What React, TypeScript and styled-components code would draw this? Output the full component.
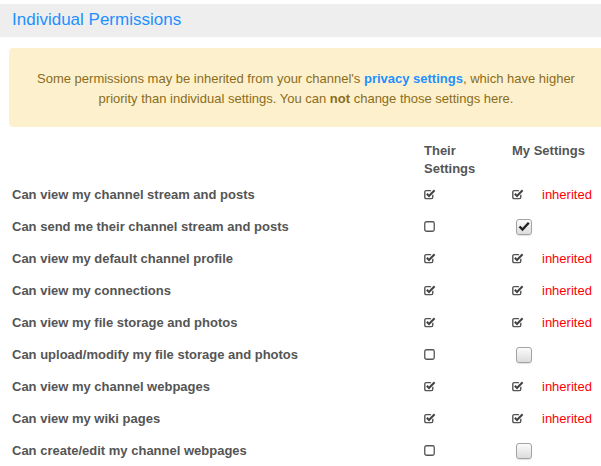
import React from "react";
import styled, { createGlobalStyle } from "styled-components";

const Global = createGlobalStyle`
  html, body { margin: 0; padding: 0; background: #fff; overflow: hidden; }
  body { font-family: "Liberation Sans", Arial, sans-serif; }
`;

const Page = styled.div`
  width: 603px;
  padding-top: 4px;
`;

const TitleBar = styled.div`
  background: #eeeeee;
  height: 33px;
  display: flex;
  align-items: center;
  padding-left: 12px;
`;

const Title = styled.h2`
  margin: 0;
  font-size: 17px;
  font-weight: normal;
  color: #1e90ff;
  line-height: 1;
  position: relative;
  top: -1px;
`;

const Alert = styled.div`
  margin: 11px 0 0 9px;
  padding: 21px 15px 18px;
  background: #fdf0cd;
  border-radius: 4px 0 0 4px;
  color: #8a6d1b;
  font-size: 13px;
  line-height: 20px;
  text-align: center;
`;

const Link = styled.a`
  color: #1e90ff;
  font-weight: bold;
  text-decoration: none;
`;

const Table = styled.div`
  margin-top: 15px;
  padding-left: 12px;
  display: grid;
  grid-template-columns: 412px 88px 30px 1fr;
  font-size: 13px;
  color: #555;
`;

const HeadCell = styled.div<{ $wide?: boolean }>`
  font-weight: bold;
  line-height: 18px;
  padding-right: 10px;
  color: #555;
  grid-column: ${(p) => (p.$wide ? "span 2" : "auto")};
  white-space: ${(p) => (p.$wide ? "nowrap" : "normal")};
`;

const Label = styled.div`
  font-weight: bold;
  height: 32px;
  display: flex;
  align-items: center;
  color: #555;
`;

const IconCell = styled.div`
  height: 32px;
  display: flex;
  align-items: center;
`;

const Inherited = styled.div`
  height: 32px;
  display: flex;
  align-items: center;
  color: #ff0000;
  font-size: 13px;
`;

const BigBox = styled.span`
  width: 14px;
  height: 14px;
  margin-left: 4px;
  margin-top: 1px;
  border: 1px solid #a3a3a3;
  border-radius: 3px;
  background: linear-gradient(#fbfbfb, #dcdcdc);
  box-shadow: 0 1px 1px rgba(0, 0, 0, 0.12);
  display: flex;
  align-items: center;
  justify-content: center;
`;

const CheckSquare = () => (
  <svg width="12" height="12" viewBox="0 0 12 12" style={{ display: "block", marginTop: -1 }}>
    <path
      d="M8.8 6.8 V9.2 Q8.8 10.6 7.4 10.6 H2.2 Q0.8 10.6 0.8 9.2 V4 Q0.8 2.6 2.2 2.6 H7"
      fill="none"
      stroke="#555"
      strokeWidth="1.4"
    />
    <path d="M2.8 5.8 L5 8 L10.6 2.2" fill="none" stroke="#444" strokeWidth="2.1" />
  </svg>
);

const EmptySquare = () => (
  <svg width="11" height="11" viewBox="0 0 11 11" style={{ display: "block" }}>
    <rect x="0.75" y="0.75" width="9.5" height="9.5" rx="1.8" fill="none" stroke="#555" strokeWidth="1.3" />
  </svg>
);

const BigCheck = ({ checked }: { checked: boolean }) => (
  <BigBox>
    {checked && (
      <svg width="12" height="11" viewBox="0 0 12 11">
        <path d="M1.5 5.5 L4.5 8.5 L10.8 1.8" fill="none" stroke="#222" strokeWidth="2.4" />
      </svg>
    )}
  </BigBox>
);

type Row = { label: string; their: boolean; my: boolean; inherited: boolean };

const rows: Row[] = [
  { label: "Can view my channel stream and posts", their: true, my: true, inherited: true },
  { label: "Can send me their channel stream and posts", their: false, my: true, inherited: false },
  { label: "Can view my default channel profile", their: true, my: true, inherited: true },
  { label: "Can view my connections", their: true, my: true, inherited: true },
  { label: "Can view my file storage and photos", their: true, my: true, inherited: true },
  { label: "Can upload/modify my file storage and photos", their: false, my: false, inherited: false },
  { label: "Can view my channel webpages", their: true, my: true, inherited: true },
  { label: "Can view my wiki pages", their: true, my: true, inherited: true },
  { label: "Can create/edit my channel webpages", their: false, my: false, inherited: false },
];

export default function App() {
  return (
    <Page>
      <Global />
      <TitleBar>
        <Title>Individual Permissions</Title>
      </TitleBar>
      <Alert>
        Some permissions may be inherited from your channel's <Link href="#">privacy settings</Link>, which have higher
        <br />
        priority than individual settings. You can <b>not</b> change those settings here.
      </Alert>
      <Table>
        <HeadCell />
        <HeadCell>Their Settings</HeadCell>
        <HeadCell $wide>My Settings</HeadCell>
        {rows.map((r) => (
          <React.Fragment key={r.label}>
            <Label>{r.label}</Label>
            <IconCell>{r.their ? <CheckSquare /> : <EmptySquare />}</IconCell>
            <IconCell>{r.inherited ? <CheckSquare /> : <BigCheck checked={r.my} />}</IconCell>
            <Inherited>{r.inherited ? "inherited" : ""}</Inherited>
          </React.Fragment>
        ))}
      </Table>
    </Page>
  );
}
